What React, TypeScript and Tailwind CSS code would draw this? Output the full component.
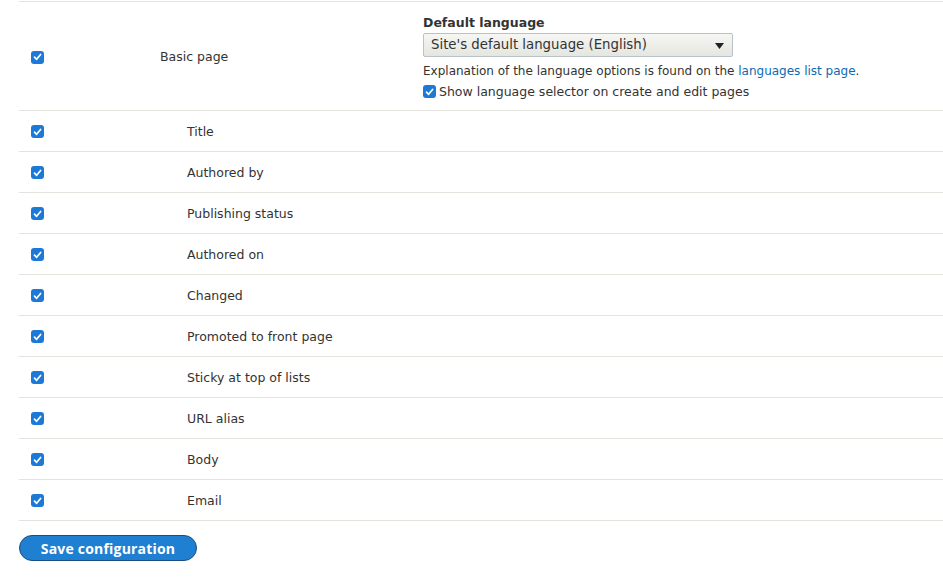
import React from "react";

const font = { fontFamily: '"DejaVu Sans", "Lucida Grande", sans-serif' };

function Check({ className = "" }: { className?: string }) {
  return (
    <span className={`inline-flex h-[13px] w-[13px] items-center justify-center rounded-[3px] bg-[#1c7ad6] ${className}`}>
      <svg width="9" height="8" viewBox="0 0 9 8">
        <path d="M1.5 4.2 L3.6 6.3 L7.6 1.5" fill="none" stroke="white" strokeWidth="1.7" strokeLinecap="round" strokeLinejoin="round" />
      </svg>
    </span>
  );
}

const fields = [
  "Title",
  "Authored by",
  "Publishing status",
  "Authored on",
  "Changed",
  "Promoted to front page",
  "Sticky at top of lists",
  "URL alias",
  "Body",
  "Email",
];

export default function App() {
  return (
    <div className="h-[580px] w-[943px] overflow-hidden bg-white text-[12.5px] text-[#333]" style={font}>
      <div className="ml-[19px] mt-px border-t border-[#e5e3dd]">
        <div className="flex h-[109px] border-b border-[#e5e3dd]">
          <div className="flex w-[141px] items-center pl-[12px] pt-[2px]">
            <Check />
          </div>
          <div className="flex w-[263px] items-center pt-[2px]">Basic page</div>
          <div className="flex flex-col pt-[13px]">
            <div className="mb-[3px] font-bold leading-[15px]">Default language</div>
            <div className="relative flex h-[24px] w-[310px] items-center rounded-[2px] border border-[#b8c2c9] bg-gradient-to-b from-[#f6f6f3] to-[#e6e6e0] pl-[7px] text-[13.3px] text-[#333]">
              Site's default language (English)
              <svg className="absolute right-[8px] top-[9px]" width="9" height="6" viewBox="0 0 9 6">
                <path d="M0 0 L9 0 L4.5 6 Z" fill="#222" />
              </svg>
            </div>
            <div className="mt-[7px] text-[12px] leading-[15px]">
              Explanation of the language options is found on the{" "}
              <span className="text-[#0a6bb5]">languages list page</span>.
            </div>
            <div className="mt-[5px] flex h-[15px] items-center gap-[3px] leading-[15px]">
              <Check />
              <span>Show language selector on create and edit pages</span>
            </div>
          </div>
        </div>
        {fields.map((f) => (
          <div key={f} className="flex h-[41px] items-center border-b border-[#e5e3dd]">
            <div className="flex w-[168px] items-center pl-[12px] pt-[1px]">
              <Check />
            </div>
            <div className="pt-[2px]">{f}</div>
          </div>
        ))}
      </div>
      <div className="ml-[19px] mt-[14px]">
        <button
          className="h-[26px] w-[178px] rounded-full border border-[#1b4f80] bg-[#1f7fd0] text-[14px] font-bold tracking-[0.2px] text-white"
          style={{ fontFamily: '"Open Sans", sans-serif' }}
        >
          Save configuration
        </button>
      </div>
    </div>
  );
}
